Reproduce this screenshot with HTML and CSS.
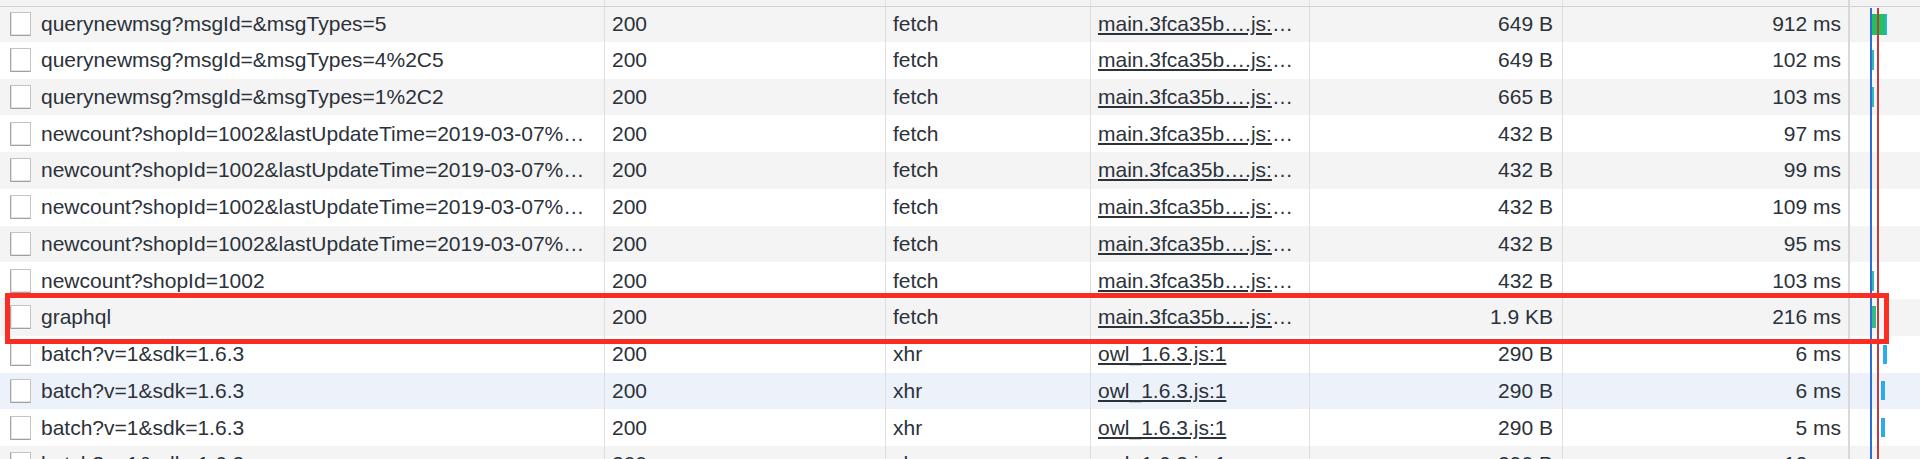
FILE: index.html
```html
<!DOCTYPE html>
<html>
<head>
<meta charset="utf-8">
<link rel="stylesheet" href="styles.css">
</head>
<body>
<div class="table">
  <div class="row head">
    <div class="cell"></div><div class="cell"></div><div class="cell"></div><div class="cell"></div><div class="cell"></div><div class="cell time"></div><div class="wf"></div>
  </div>

  <div class="row first gray">
    <div class="cell name"><span class="doc"></span><span class="txt">querynewmsg?msgId=&amp;msgTypes=5</span></div>
    <div class="cell">200</div><div class="cell">fetch</div>
    <div class="cell"><span class="link">main.3fca35b….js:</span>…</div>
    <div class="cell num">649 B</div><div class="cell num time">912 ms</div>
    <div class="wf"><span class="bar green" style="margin-left:21px;width:14px;height:21px"></span><span class="bar blue" style="width:2px;height:21px"></span></div>
  </div>

  <div class="row">
    <div class="cell name"><span class="doc"></span><span class="txt">querynewmsg?msgId=&amp;msgTypes=4%2C5</span></div>
    <div class="cell">200</div><div class="cell">fetch</div>
    <div class="cell"><span class="link">main.3fca35b….js:</span>…</div>
    <div class="cell num">649 B</div><div class="cell num time">102 ms</div>
    <div class="wf"><span class="bar teal" style="margin-left:21px;width:3px;height:20px"></span></div>
  </div>

  <div class="row gray">
    <div class="cell name"><span class="doc"></span><span class="txt">querynewmsg?msgId=&amp;msgTypes=1%2C2</span></div>
    <div class="cell">200</div><div class="cell">fetch</div>
    <div class="cell"><span class="link">main.3fca35b….js:</span>…</div>
    <div class="cell num">665 B</div><div class="cell num time">103 ms</div>
    <div class="wf"><span class="bar teal" style="margin-left:21px;width:3px;height:20px"></span></div>
  </div>

  <div class="row">
    <div class="cell name"><span class="doc"></span><span class="txt">newcount?shopId=1002&amp;lastUpdateTime=2019-03-07%…</span></div>
    <div class="cell">200</div><div class="cell">fetch</div>
    <div class="cell"><span class="link">main.3fca35b….js:</span>…</div>
    <div class="cell num">432 B</div><div class="cell num time">97 ms</div>
    <div class="wf"></div>
  </div>

  <div class="row gray">
    <div class="cell name"><span class="doc"></span><span class="txt">newcount?shopId=1002&amp;lastUpdateTime=2019-03-07%…</span></div>
    <div class="cell">200</div><div class="cell">fetch</div>
    <div class="cell"><span class="link">main.3fca35b….js:</span>…</div>
    <div class="cell num">432 B</div><div class="cell num time">99 ms</div>
    <div class="wf"></div>
  </div>

  <div class="row">
    <div class="cell name"><span class="doc"></span><span class="txt">newcount?shopId=1002&amp;lastUpdateTime=2019-03-07%…</span></div>
    <div class="cell">200</div><div class="cell">fetch</div>
    <div class="cell"><span class="link">main.3fca35b….js:</span>…</div>
    <div class="cell num">432 B</div><div class="cell num time">109 ms</div>
    <div class="wf"></div>
  </div>

  <div class="row gray">
    <div class="cell name"><span class="doc"></span><span class="txt">newcount?shopId=1002&amp;lastUpdateTime=2019-03-07%…</span></div>
    <div class="cell">200</div><div class="cell">fetch</div>
    <div class="cell"><span class="link">main.3fca35b….js:</span>…</div>
    <div class="cell num">432 B</div><div class="cell num time">95 ms</div>
    <div class="wf"></div>
  </div>

  <div class="row">
    <div class="cell name"><span class="doc"></span><span class="txt">newcount?shopId=1002</span></div>
    <div class="cell">200</div><div class="cell">fetch</div>
    <div class="cell"><span class="link">main.3fca35b….js:</span>…</div>
    <div class="cell num">432 B</div><div class="cell num time">103 ms</div>
    <div class="wf"><span class="bar teal" style="margin-left:21px;width:3px;height:20px"></span></div>
  </div>

  <div class="row gray">
    <div class="cell name"><span class="doc"></span><span class="txt">graphql</span></div>
    <div class="cell">200</div><div class="cell">fetch</div>
    <div class="cell"><span class="link">main.3fca35b….js:</span>…</div>
    <div class="cell num">1.9 KB</div><div class="cell num time">216 ms</div>
    <div class="wf"><span class="bar mix" style="margin-left:22px;width:4px;height:22px"></span></div>
  </div>

  <div class="row">
    <div class="cell name"><span class="doc"></span><span class="txt">batch?v=1&amp;sdk=1.6.3</span></div>
    <div class="cell">200</div><div class="cell">xhr</div>
    <div class="cell"><span class="link">owl_1.6.3.js:1</span></div>
    <div class="cell num">290 B</div><div class="cell num time">6 ms</div>
    <div class="wf"><span class="bar blue" style="margin-left:33px;width:4px;height:19px"></span></div>
  </div>

  <div class="row hover">
    <div class="cell name"><span class="doc"></span><span class="txt">batch?v=1&amp;sdk=1.6.3</span></div>
    <div class="cell">200</div><div class="cell">xhr</div>
    <div class="cell"><span class="link">owl_1.6.3.js:1</span></div>
    <div class="cell num">290 B</div><div class="cell num time">6 ms</div>
    <div class="wf"><span class="bar blue" style="margin-left:31px;width:4px;height:19px"></span></div>
  </div>

  <div class="row">
    <div class="cell name"><span class="doc"></span><span class="txt">batch?v=1&amp;sdk=1.6.3</span></div>
    <div class="cell">200</div><div class="cell">xhr</div>
    <div class="cell"><span class="link">owl_1.6.3.js:1</span></div>
    <div class="cell num">290 B</div><div class="cell num time">5 ms</div>
    <div class="wf"><span class="bar blue" style="margin-left:31px;width:4px;height:19px"></span></div>
  </div>

  <div class="row gray">
    <div class="cell name"><span class="doc"></span><span class="txt">batch?v=1&amp;sdk=1.6.3</span></div>
    <div class="cell">200</div><div class="cell">xhr</div>
    <div class="cell"><span class="link">owl_1.6.3.js:1</span></div>
    <div class="cell num">290 B</div><div class="cell num time">12 ms</div>
    <div class="wf"><span class="bar blue" style="margin-left:27px;width:2px;height:20px"></span></div>
  </div>

  <div class="vline blue-line"></div>
  <div class="vline red-line"></div>
  <div class="highlight"></div>
</div>
</body>
</html>
```
FILE: styles.css
```css
html, body {
  margin: 0;
  padding: 0;
  background: #ffffff;
  overflow: hidden;
  height: 459px;
}

.table {
  position: relative;
  display: flex;
  flex-direction: column;
  width: 1920px;
  font-family: "Liberation Sans", Arial, Helvetica, sans-serif;
  font-size: 21px;
  color: #2b323a;
}

.row {
  display: grid;
  grid-template-columns: 605px 281px 205px 219px 253px 287px 1fr;
  height: 36.75px;
  flex: none;
  background: #ffffff;
}

.row.head {
  height: 6px;
  background: #f3f3f3;
  border-bottom: 1px solid #d2d2d2;
}

.row.first {
  height: 34.75px;
}

.row.gray {
  background: #f4f4f4;
}

.row.hover {
  background: #edf2fa;
}

.cell {
  display: flex;
  align-items: center;
  min-width: 0;
  padding: 0 8px 0 7px;
  border-right: 1px solid #dfdfdf;
  white-space: nowrap;
  overflow: hidden;
}

.cell.num {
  justify-content: flex-end;
  padding-right: 9px;
}

.cell.time {
  border-right: 2px solid #d9d9d9;
  padding-right: 7px;
}

.cell.name {
  padding-left: 10px;
  padding-right: 4px;
}

.txt {
  margin-left: 10px;
  overflow: hidden;
  text-overflow: ellipsis;
}

.doc {
  flex: none;
  width: 21px;
  height: 24px;
  box-sizing: border-box;
  background: #ffffff;
  border: 1px solid #c4c4c4;
  border-left-color: #a6a6a6;
  border-bottom-color: #a0a0a0;
  box-shadow: inset 1px -1px 0 #e2e2e2;
  border-radius: 1px;
}

.link {
  text-decoration: underline;
  text-underline-offset: 2px;
}

.wf {
  display: flex;
  align-items: center;
  min-width: 0;
}

.bar {
  display: block;
  flex: none;
}

.bar.green {
  background: #21c25c;
}

.bar.blue {
  background: #2aacf2;
}

.bar.teal {
  background: linear-gradient(90deg, #3db0e8 0, #2fc0a0 60%, #2ab3e6 100%);
}

.bar.mix {
  background: linear-gradient(90deg, #3aa8e8 0, #35c263 35%, #35c263 75%, #2aacf2 100%);
}

.vline {
  position: absolute;
  top: 8px;
  bottom: 0;
  width: 2px;
}

.blue-line {
  left: 1870px;
  background: #2b6fd4;
}

.red-line {
  left: 1877px;
  background: #c23a3a;
}

.highlight {
  position: absolute;
  left: 5px;
  top: 293px;
  width: 1884px;
  height: 51px;
  box-sizing: border-box;
  border: 5px solid #fb2c22;
}
```
